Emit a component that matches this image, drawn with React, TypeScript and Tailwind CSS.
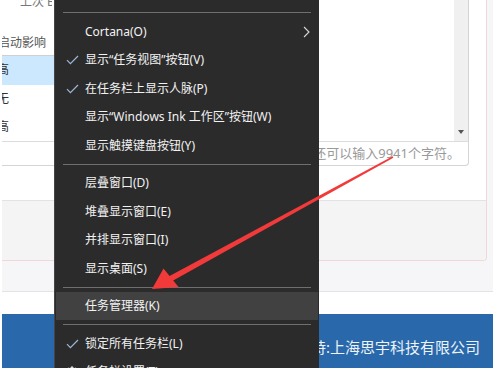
import React from 'react';

const FONT = { fontFamily: '"Noto Sans", "Noto Sans CJK SC", sans-serif' };

type Item =
  | { kind: 'sep' }
  | { kind: 'item'; label: string; check?: boolean; sub?: boolean; active?: boolean; gear?: boolean };

const MENU: Item[] = [
  { kind: 'item', label: '搜索(H)', sub: true },
  { kind: 'sep' },
  { kind: 'item', label: 'Cortana(O)', sub: true },
  { kind: 'item', label: '显示“任务视图”按钮(V)', check: true },
  { kind: 'item', label: '在任务栏上显示人脉(P)', check: true },
  { kind: 'item', label: '显示“Windows Ink 工作区”按钮(W)' },
  { kind: 'item', label: '显示触摸键盘按钮(Y)' },
  { kind: 'sep' },
  { kind: 'item', label: '层叠窗口(D)' },
  { kind: 'item', label: '堆叠显示窗口(E)' },
  { kind: 'item', label: '并排显示窗口(I)' },
  { kind: 'item', label: '显示桌面(S)' },
  { kind: 'sep' },
  { kind: 'item', label: '任务管理器(K)', active: true },
  { kind: 'sep' },
  { kind: 'item', label: '锁定所有任务栏(L)', check: true },
  { kind: 'item', label: '任务栏设置(T)', gear: true },
];

function Check() {
  return (
    <svg width="13" height="10" viewBox="0 0 13 10" fill="none">
      <path d="M1 5.2 L4.4 8.6 L12 1" stroke="#9cb9d8" strokeWidth="1.2" />
    </svg>
  );
}

function Chevron() {
  return (
    <svg width="7" height="12" viewBox="0 0 7 12" fill="none">
      <path d="M1 1 L6 6 L1 11" stroke="#d8d8d8" strokeWidth="1.1" />
    </svg>
  );
}

function Gear() {
  return (
    <svg width="14" height="14" viewBox="0 0 24 24" fill="none" stroke="#f0f0f0" strokeWidth="2.2">
      <circle cx="12" cy="12" r="3.2" />
      <path d="M12 2v3M12 19v3M2 12h3M19 12h3M4.9 4.9l2.1 2.1M17 17l2.1 2.1M4.9 19.1 7 17M17 7l2.1-2.1" />
      <circle cx="12" cy="12" r="7" />
    </svg>
  );
}

function ContextMenu() {
  return (
    <div className="absolute left-[54px] top-0 w-[265px] h-[368px] overflow-hidden bg-[#2b2b2b] border-l border-[#454545]">
      <div className="absolute left-0 right-0 top-[-20.25px]">
        {MENU.map((m, i) =>
          m.kind === 'sep' ? (
            <div key={i} className="h-[9px] flex items-center px-[8px]">
              <div className="h-px w-full bg-[#6f6f6f]" />
            </div>
          ) : (
            <div key={i} className={`h-[28.5px] mx-[1px] flex items-center ${m.active ? 'bg-[#414141]' : ''}`}>
              <div className="w-[29px] flex justify-center pl-[3px]">
                {m.check && <Check />}
                {m.gear && <Gear />}
              </div>
              <span className="flex-1 text-[12px] text-[#f2f2f2] whitespace-nowrap">{m.label}</span>
              {m.sub && (
                <div className="w-[20px] flex justify-center pr-[4px]">
                  <Chevron />
                </div>
              )}
            </div>
          ),
        )}
      </div>
    </div>
  );
}

function RedArrow() {
  return (
    <svg className="absolute inset-0 pointer-events-none" width="493" height="368" viewBox="0 0 493 368">
      <polygon points="171.4,281.4 168.6,276.6 392.6,156.2 393.4,157.8" fill="#f23a3a" />
      <polygon points="152,289 163.5,268.5 178.5,287" fill="#f23a3a" />
    </svg>
  );
}

export default function App() {
  const rows = [
    { v: '高', sel: true },
    { v: '无', sel: false },
    { v: '高', sel: false },
  ];

  return (
    <div className="relative w-[493px] h-[368px] overflow-hidden bg-white pl-[2px]" style={FONT}>
      <div className="flex flex-col">
        {/* panel */}
        <div className="flex h-[261px] bg-[#f6f6f8]">
          <div className="flex-1 bg-white border-r border-b border-[#f1d6dc] rounded-br-[4px] flex flex-col overflow-hidden">
            {/* textarea box */}
            <div className="h-[166px] mr-[17px] border-r border-b border-[#d5d5d5] rounded-br-[4px] flex flex-col">
              <div className="h-[141px] flex overflow-hidden">
                <div className="flex-1 overflow-hidden">
                  <div className="w-[50px] overflow-hidden text-[12px] leading-[16px] text-[#777] mt-[-6px] pl-[18px] whitespace-nowrap">
                    上次 BIOS 所用时间
                  </div>
                  <div className="w-[220px] mt-[20px]">
                    <div className="h-[26px] flex items-center border-b border-[#cfcfcf] text-[12px] text-[#555] ml-[-4px] whitespace-nowrap">
                      启动影响
                    </div>
                    {rows.map((r, i) => (
                      <div
                        key={i}
                        className={`h-[28.5px] flex items-center text-[12px] text-[#333] ${r.sel ? 'bg-[#cce8ff]' : ''}`}
                      >
                        <span className="ml-[-5px]">{r.v}</span>
                      </div>
                    ))}
                  </div>
                </div>
                <div className="w-[14px] bg-[#f0f0f0] flex flex-col justify-end items-center pb-[7px]">
                  <div className="w-0 h-0 border-l-[3.5px] border-r-[3.5px] border-t-[4px] border-l-transparent border-r-transparent border-t-[#555]" />
                </div>
              </div>
              <div className="flex-1 border-t border-[#dcdcdc] flex items-center justify-end pr-[8px] text-[13px] text-[#999] whitespace-nowrap">
                您还可以输入9941个字符。
              </div>
            </div>
            <div className="h-[34px]" />
            <div className="flex-1 border-t border-[#e3e3e3] bg-[#f4f4f4]" />
          </div>
          <div className="w-[6px]" />
        </div>
        <div className="h-[30px] bg-[#f6f6f8]" />
        <div className="h-[23px] border-t border-[#e4e4e4] bg-white" />
        <div className="h-[54px] bg-[#2868ab] flex justify-end pr-[13px] pt-[23px]">
          <span className="text-[15px] leading-[20px] text-[#eef3f9] whitespace-nowrap">技术支持:上海思宇科技有限公司</span>
        </div>
      </div>
      <ContextMenu />
      <RedArrow />
    </div>
  );
}
